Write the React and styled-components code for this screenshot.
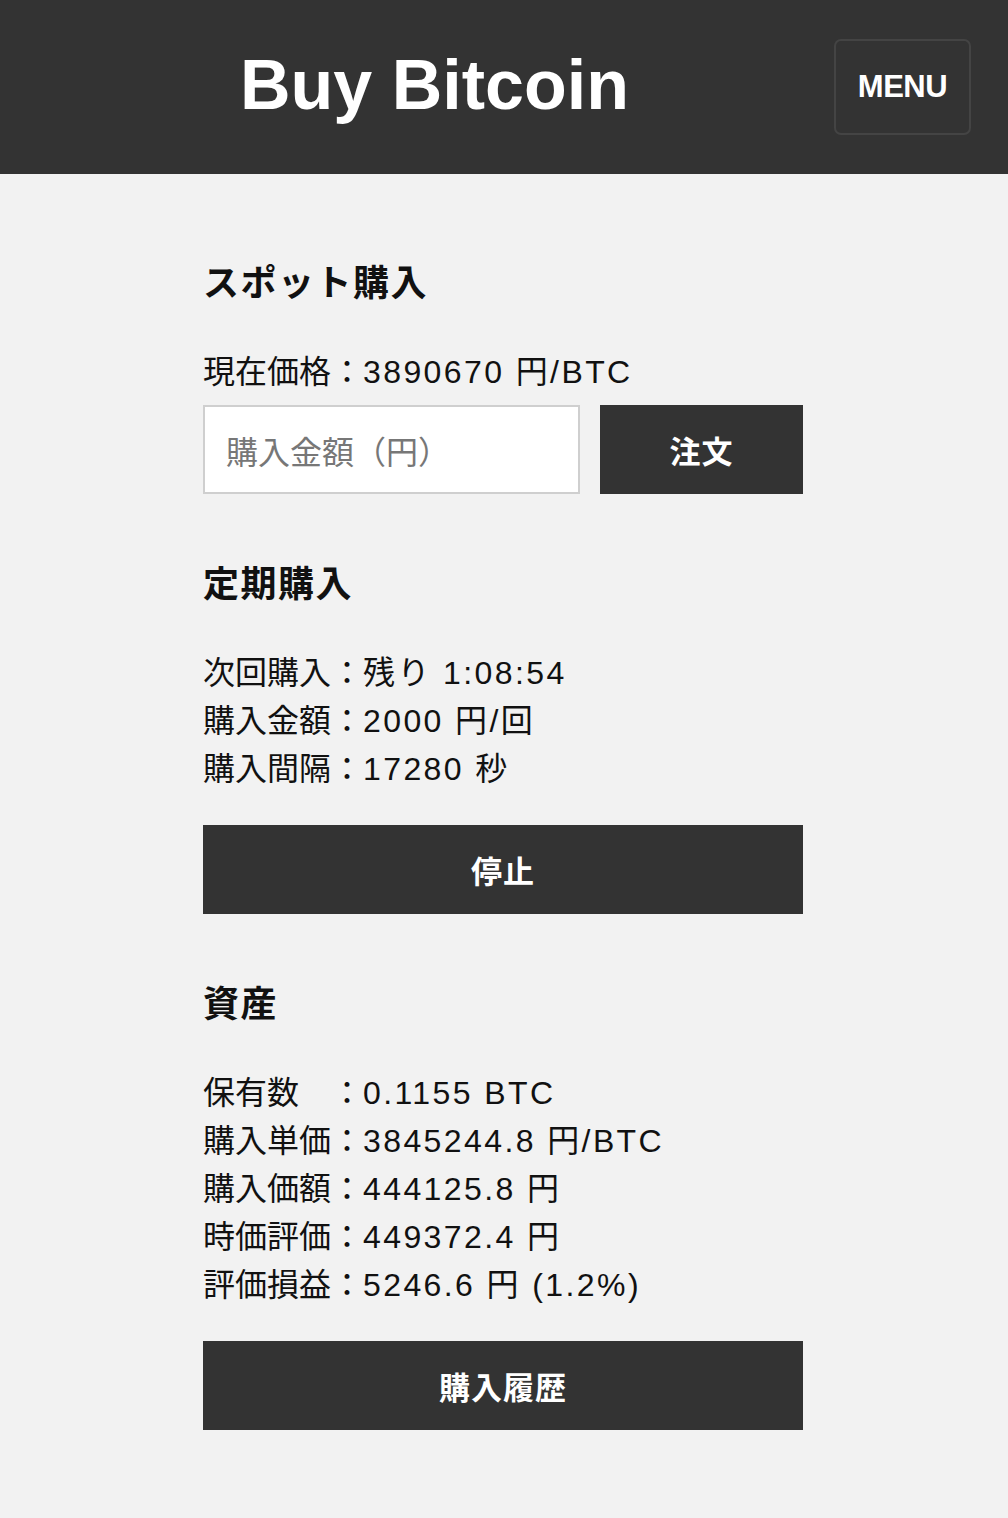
import React from 'react';
import styled, { createGlobalStyle } from 'styled-components';

const GlobalStyle = createGlobalStyle`
  html, body {
    margin: 0;
    padding: 0;
    background: #f2f2f2;
  }
  body {
    font-family: "Liberation Sans", "Noto Sans CJK JP", sans-serif;
    color: #111;
  }
`;

const Page = styled.div`
  min-height: 1518px;
  background: #f2f2f2;
`;

const Header = styled.header`
  height: 174px;
  background: #333333;
  display: flex;
  align-items: center;
  justify-content: space-between;
  padding: 0 37px 0 240px;
  box-sizing: border-box;
`;

const Title = styled.h1`
  margin: 0;
  color: #fff;
  font-family: "Liberation Sans", sans-serif;
  font-weight: 700;
  font-size: 70px;
  line-height: 1;
  transform: translateY(-2px);
`;

const MenuButton = styled.button`
  width: 137px;
  height: 96px;
  background: transparent;
  border: 2px solid #444;
  border-radius: 7px;
  color: #fff;
  font-family: "Liberation Sans", sans-serif;
  font-weight: 700;
  font-size: 31px;
  letter-spacing: -0.5px;
  cursor: pointer;
  padding: 0;
`;

const Main = styled.main`
  width: 600px;
  margin-left: 203px;
  padding-top: 81px;
  padding-bottom: 89px;
`;

const Section = styled.section`
  & + & {
    margin-top: 62px;
  }
`;

const Heading = styled.h2`
  margin: 0 0 42px;
  font-family: "Noto Sans CJK JP", sans-serif;
  font-size: 36px;
  font-weight: 700;
  letter-spacing: 1.5px;
  line-height: 50px;
  color: #111;
`;

const Lines = styled.div`
  font-size: 32px;
`;

const Line = styled.div`
  display: flex;
  align-items: baseline;
  height: 48px;
  line-height: 44px;
  white-space: pre;
  color: #111;
`;

const Label = styled.span`
  font-family: "Noto Sans CJK JP", sans-serif;
`;

const Value = styled.span`
  letter-spacing: 2.4px;
`;

const OrderRow = styled.div`
  display: flex;
  gap: 20px;
  margin-top: 10px;
`;

const AmountInput = styled.input`
  width: 377px;
  height: 89px;
  box-sizing: border-box;
  border: 2px solid #cfcfcf;
  background: #fff;
  padding: 0 21px;
  font-family: "Noto Sans CJK JP", sans-serif;
  font-size: 32px;
  outline: none;
  &::placeholder {
    color: #777;
  }
`;

const DarkButton = styled.button`
  display: block;
  width: ${p => (p.$wide ? '600px' : '203px')};
  height: 89px;
  margin-top: ${p => (p.$wide ? '33px' : '0')};
  border: none;
  background: #333333;
  color: #fff;
  font-family: "Noto Sans CJK JP", sans-serif;
  font-size: 31px;
  font-weight: 700;
  letter-spacing: 1px;
  cursor: pointer;
`;

const Row = ({ label, value }) => (
  <Line>
    <Label>{label}：</Label>
    <Value>{value}</Value>
  </Line>
);

export default function App() {
  return (
    <Page>
      <GlobalStyle />
      <Header>
        <Title>Buy Bitcoin</Title>
        <MenuButton>MENU</MenuButton>
      </Header>
      <Main>
        <Section>
          <Heading>スポット購入</Heading>
          <Lines>
            <Row label="現在価格" value="3890670 円/BTC" />
          </Lines>
          <OrderRow>
            <AmountInput placeholder="購入金額（円）" />
            <DarkButton>注文</DarkButton>
          </OrderRow>
        </Section>
        <Section>
          <Heading>定期購入</Heading>
          <Lines>
            <Row label="次回購入" value="残り 1:08:54" />
            <Row label="購入金額" value="2000 円/回" />
            <Row label="購入間隔" value="17280 秒" />
          </Lines>
          <DarkButton $wide>停止</DarkButton>
        </Section>
        <Section>
          <Heading>資産</Heading>
          <Lines>
            <Row label="保有数　" value="0.1155 BTC" />
            <Row label="購入単価" value="3845244.8 円/BTC" />
            <Row label="購入価額" value="444125.8 円" />
            <Row label="時価評価" value="449372.4 円" />
            <Row label="評価損益" value="5246.6 円 (1.2%)" />
          </Lines>
          <DarkButton $wide>購入履歴</DarkButton>
        </Section>
      </Main>
    </Page>
  );
}
